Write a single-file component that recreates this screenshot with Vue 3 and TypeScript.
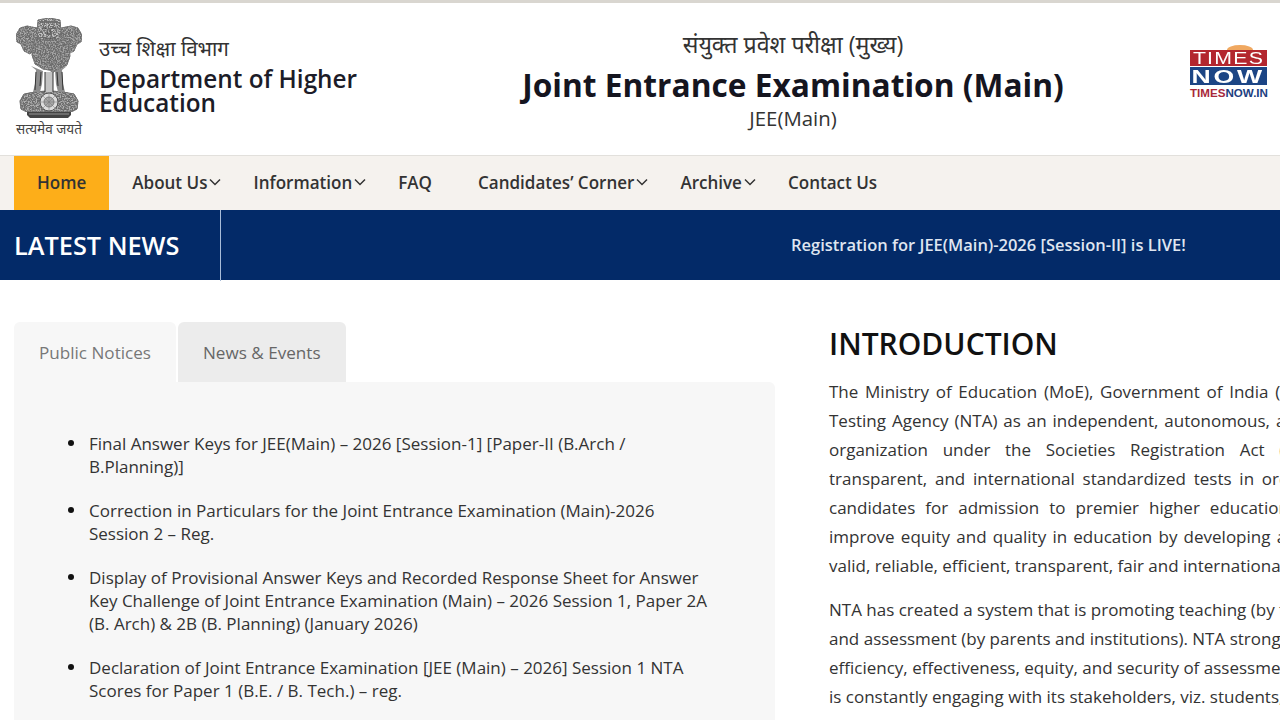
<script setup lang="ts">
const navItems = [
  { label: 'Home', active: true },
  { label: 'About Us', caret: true },
  { label: 'Information', caret: true },
  { label: 'FAQ' },
  { label: 'Candidates’ Corner', caret: true },
  { label: 'Archive', caret: true },
  { label: 'Contact Us' }
]

const notices = [
  'Final Answer Keys for JEE(Main) – 2026 [Session-1] [Paper-II (B.Arch / B.Planning)]',
  'Correction in Particulars for the Joint Entrance Examination (Main)-2026 Session 2 – Reg.',
  'Display of Provisional Answer Keys and Recorded Response Sheet for Answer Key Challenge of Joint Entrance Examination (Main) – 2026 Session 1, Paper 2A (B. Arch) & 2B (B. Planning) (January 2026)',
  'Declaration of Joint Entrance Examination [JEE (Main) – 2026] Session 1 NTA Scores for Paper 1 (B.E. / B. Tech.) – reg.'
]
</script>

<template>
  <div class="page">
    <div class="top-strip"></div>
    <header class="header">
      <div class="dept">
        <div class="emblem">
          <!-- national emblem, coordinates are page px minus (15,16) -->
          <svg viewBox="0 0 68 103" width="68" height="103">
            <defs>
              <filter id="grain" x="0" y="0" width="100%" height="100%">
                <feTurbulence type="fractalNoise" baseFrequency="0.75" numOctaves="2" seed="4" result="noise" />
                <feColorMatrix in="noise" type="matrix" values="0 0 0 0 0.15  0 0 0 0 0.15  0 0 0 0 0.15  3 3 0 0 -2.3" result="specks" />
                <feComposite in="specks" in2="SourceAlpha" operator="in" result="clipped" />
                <feMerge>
                  <feMergeNode in="SourceGraphic" />
                  <feMergeNode in="clipped" />
                </feMerge>
              </filter>
            </defs>
            <g filter="url(#grain)">
              <!-- side lions -->
              <path d="M22 12 12 10 5 12 1 19 2 26l4 2 3 7 6 3 8-8z" fill="#aaa" stroke="#666" stroke-width=".7" />
              <path d="M46 12l10-2 7 2 4 7-1 7-4 2-3 7-6 3-8-8z" fill="#aaa" stroke="#666" stroke-width=".7" />
              <!-- centre head -->
              <path d="M23 4l11-2 11 2 1 13-3 7H25l-3-7z" fill="#c8c8c8" stroke="#666" stroke-width=".8" />
              <path d="M25 6h18" stroke="#777" stroke-width="2" fill="none" />
              <path d="M27 13q3-2 5 0M36 13q3-2 5 0M33 13l-1 5h4l-1-5M27 21q7 3 14 0" fill="none" stroke="#444" stroke-width="1.3" />
              <!-- manes -->
              <path d="M21 21q13 7 26 0l6 7 2 12-3 9-9 5-5 2-4-2-6-1-8-5-3-9 1-11z" fill="#a4a4a4" stroke="#666" stroke-width=".7" />
              <!-- abacus -->
              <path d="M9 78q25-6 50 0l4 7-1 8-6 3H12l-6-3-1-8z" fill="#b0b0b0" stroke="#555" stroke-width=".8" />
            </g>
            <!-- legs -->
            <path d="M16 50l5 4-1 14-2 8h7l2-8 1-13z" fill="#8d8d8d" />
            <path d="M52 50l-5 4 1 14 2 8h-7l-2-8-1-13z" fill="#8d8d8d" />
            <path d="M30 56h8v20h-8z" fill="#c4c4c4" />
            <path d="M21 56l-1 18M47 56l1 18M30 56v20M38 56v20M26 56l-1 14M42 56l1 14" stroke="#333" stroke-width="1" fill="none" />
            <circle cx="34" cy="86" r="9" fill="#dcdcdc" stroke="#555" stroke-width="1" />
            <circle cx="34" cy="86" r="5" fill="#a8a8a8" stroke="#666" stroke-width=".7" />
            <path d="M34 77v18M25 86h18M27.6 79.6l12.8 12.8M40.4 79.6 27.6 92.4" stroke="#777" stroke-width=".5" />
            <!-- base -->
            <path d="M12 96h44v3l-3 3H15l-3-3z" fill="#444" />
            <path d="M14 98h40" stroke="#aaa" stroke-width=".8" />
          </svg>
          <span class="motto">सत्यमेव जयते</span>
        </div>
        <div class="dept-text">
          <div class="dept-hi">उच्च शिक्षा विभाग</div>
          <div class="dept-en">Department of Higher Education</div>
        </div>
      </div>
      <div class="title">
        <div class="title-hi">संयुक्त प्रवेश परीक्षा (मुख्य)</div>
        <h1>Joint Entrance Examination (Main)</h1>
        <div class="title-short">JEE(Main)</div>
      </div>
      <div class="logo">
        <div class="sun"></div>
        <div class="logo-times"><span>TIMES</span></div>
        <div class="logo-now"><span>NOW</span></div>
        <div class="logo-url"><span>TIMES</span>NOW.IN</div>
      </div>
    </header>

    <nav class="nav">
      <a v-for="item in navItems" :key="item.label" class="nav-item" :class="{ active: item.active }">
        {{ item.label }}
        <svg v-if="item.caret" viewBox="0 0 12 8" width="12" height="8">
          <path d="M1 1.5l5 5 5-5" fill="none" stroke="#333" stroke-width="1.5" />
        </svg>
      </a>
    </nav>

    <div class="ticker">
      <div class="ticker-label">LATEST NEWS</div>
      <div class="ticker-text">Registration for JEE(Main)-2026 [Session-II] is LIVE!</div>
    </div>

    <main class="content">
      <section class="left">
        <div class="tabs">
          <div class="tab current">Public Notices</div>
          <div class="tab">News &amp; Events</div>
        </div>
        <div class="panel">
          <ul>
            <li v-for="n in notices" :key="n">{{ n }}</li>
          </ul>
        </div>
      </section>
      <section class="right">
        <h2>INTRODUCTION</h2>
        <p>The Ministry of Education (MoE), Government of India (GoI) has established the National Testing Agency (NTA) as an independent, autonomous, and self-sustained premier testing organization under the Societies Registration Act (1860) for conducting efficient, transparent, and international standardized tests in order to assess the competency of candidates for admission to premier higher education institutions. NTA also aims to improve equity and quality in education by developing and administering research-based valid, reliable, efficient, transparent, fair and international level assessments.</p>
        <p class="second">NTA has created a system that is promoting teaching (by teachers), learning (by students)<br>and assessment (by parents and institutions). NTA strongly believes in quality,<br>efficiency, effectiveness, equity, and security of assessments. To practice these values, NTA<br>is constantly engaging with its stakeholders, viz. students, parents, teachers, experts, and<br>partner institutions.</p>
      </section>
    </main>
  </div>
</template>

<style>
html, body {
  margin: 0;
  overflow: hidden;
  background: #fff;
}
</style>

<style scoped>
.page {
  width: 1280px;
  height: 720px;
  overflow: hidden;
  font-family: "Open Sans", "Noto Sans", sans-serif;
  color: #333;
}

.top-strip {
  height: 3px;
  background: #d9d6d0;
}

.header {
  height: 153px;
  display: flex;
  box-sizing: border-box;
  border-bottom: 1px solid #e2e0dc;
  padding: 13px 13px 0 15px;
}

.dept {
  width: 505px;
  display: flex;
  flex: none;
}

.emblem {
  width: 68px;
  flex: none;
  display: flex;
  flex-direction: column;
  align-items: center;
}

.emblem svg {
  display: block;
}

.motto {
  margin-top: 2px;
  font-size: 13.6px;
  line-height: 16px;
  color: #444;
  white-space: nowrap;
}

.dept-text {
  margin-left: 16px;
  padding-top: 18px;
  width: 280px;
}

.dept-hi {
  font-size: 20.5px;
  line-height: 28px;
  color: #333;
}

.dept-en {
  font-size: 24.3px;
  line-height: 24px;
  font-weight: 600;
  color: #1c1c28;
  margin-top: 5px;
}

.title {
  width: 546px;
  flex: none;
  text-align: center;
  padding-top: 12px;
}

.title-hi {
  font-size: 23.2px;
  line-height: 32px;
}

.title h1 {
  margin: 3px 0 0;
  font-size: 31.7px;
  line-height: 44px;
  font-weight: 700;
  color: #15151f;
}

.title-short {
  font-size: 20.4px;
  line-height: 26px;
  margin-top: -2px;
}

.logo {
  margin-left: auto;
  margin-top: 34px;
  width: 77px;
  position: relative;
}

.sun {
  position: absolute;
  left: 37px;
  top: -5px;
  width: 26px;
  height: 5px;
  background: #f0a860;
  border-radius: 50% 50% 0 0 / 100% 100% 0 0;
}

.logo-times,
.logo-now {
  text-align: center;
  color: #fff;
  font-family: "Liberation Sans", sans-serif;
}

.logo-times span,
.logo-now span {
  display: inline-block;
}

.logo-times {
  height: 16px;
  line-height: 17px;
  background: #b3262e;
  font-size: 17px;
}

.logo-times span {
  letter-spacing: 1px;
  transform: scaleX(1.25);
}

.logo-now {
  height: 18px;
  line-height: 19px;
  background: #1c4585;
  margin-top: 1px;
  font-size: 19px;
  font-weight: 700;
}

.logo-now span {
  letter-spacing: 2px;
  transform: scaleX(1.4);
}

.logo-url {
  font-family: "Liberation Sans", sans-serif;
  font-size: 11.6px;
  font-weight: 700;
  line-height: 13px;
  color: #20407f;
  margin-top: 1px;
  text-align: center;
  white-space: nowrap;
}

.logo-url span {
  color: #a8283a;
}

.nav {
  height: 54px;
  background: #f5f2ee;
  display: flex;
  padding-left: 14px;
}

.nav-item {
  display: flex;
  align-items: center;
  gap: 2px;
  padding: 0 23px 2px;
  font-size: 17.04px;
  font-weight: 600;
  color: #333;
}

.nav-item svg {
  margin-right: -14px;
}

.nav-item.active {
  background: #fdae19;
}

.ticker {
  height: 70px;
  background: #032a68;
  display: flex;
  align-items: center;
  padding-bottom: 2px;
  box-sizing: border-box;
  color: #fff;
}

.ticker-label {
  width: 206px;
  height: 70px;
  margin-bottom: -2px;
  padding-left: 14px;
  padding-bottom: 1px;
  box-sizing: content-box;
  border-right: 1px solid #a9bcd8;
  display: flex;
  align-items: center;
  font-size: 25.3px;
  font-weight: 600;
}

.ticker-text {
  margin-left: 570px;
  font-size: 16.5px;
  font-weight: 600;
  color: #dfe5f0;
  white-space: nowrap;
}

.content {
  display: flex;
  padding: 42px 0 0 14px;
}

.left {
  width: 761px;
  flex: none;
}

.tabs {
  display: flex;
  gap: 2px;
}

.tab {
  height: 60px;
  line-height: 62px;
  padding: 0 25px;
  font-size: 17.1px;
  color: #666;
  background: #ececec;
  border-radius: 6px 6px 0 0;
}

.tab.current {
  background: #f7f7f7;
  color: #777;
}

.panel {
  background: #f7f7f7;
  height: 400px;
  border-radius: 0 6px 0 0;
  padding: 50px 60px 0 0;
}

.panel ul {
  margin: 0;
  padding-left: 75px;
  list-style: none;
}

.panel li {
  position: relative;
  font-size: 17px;
  line-height: 23px;
  margin-bottom: 21px;
}

.panel li::before {
  content: "";
  position: absolute;
  left: -21px;
  top: 8px;
  width: 6px;
  height: 6px;
  border-radius: 50%;
  background: #111;
}

.right {
  margin-left: 54px;
  width: 722px;
  flex: none;
}

.right h2 {
  margin: 0;
  font-size: 30px;
  line-height: 43px;
  font-weight: 600;
  color: #111;
}

.right p {
  margin: 12px 0 0;
  font-size: 17px;
  line-height: 29px;
  text-align: justify;
}

.right p.second {
  margin-top: 15px;
  text-align: left;
  white-space: nowrap;
}
</style>
